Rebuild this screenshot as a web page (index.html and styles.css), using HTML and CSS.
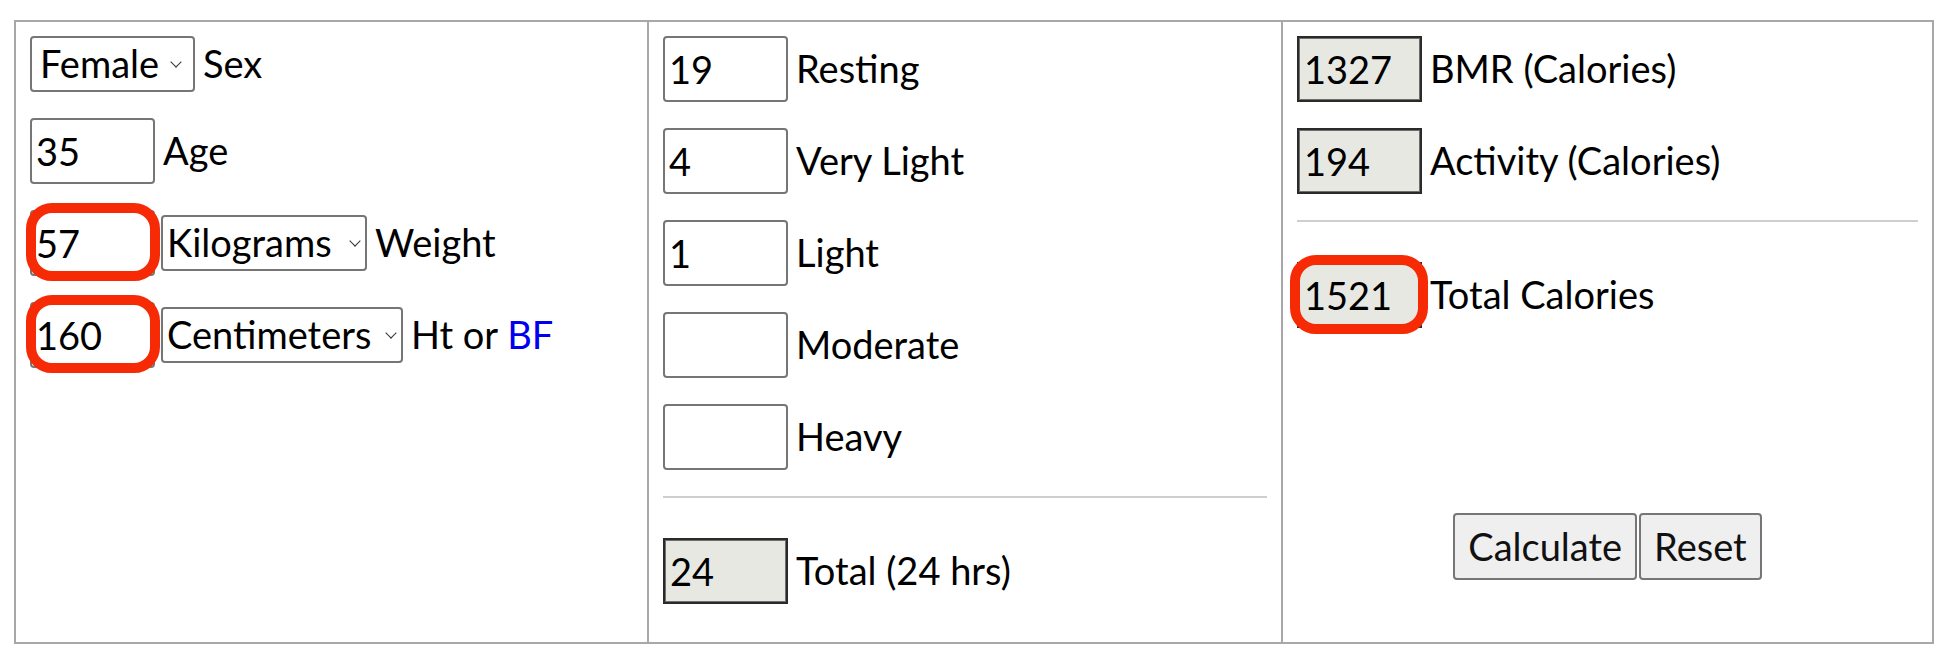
FILE: index.html
```html
<!DOCTYPE html>
<html lang="en">
<head>
<meta charset="utf-8">
<title>Calorie Calculator</title>
<link rel="stylesheet" href="styles.css">
</head>
<body>
<form class="calc">
  <div class="cell">
    <div class="row">
      <span class="select-wrap w-sex"><select><option>Female</option><option>Male</option></select></span>
      <span class="label">Sex</span>
    </div>
    <div class="row">
      <input class="field" type="text" value="35">
      <span class="label">Age</span>
    </div>
    <div class="row">
      <span class="ring"><input class="field" type="text" value="57"></span>
      <span class="select-wrap w-weight tight"><select><option>Kilograms</option><option>Pounds</option></select></span>
      <span class="label">Weight</span>
    </div>
    <div class="row">
      <span class="ring"><input class="field" type="text" value="160"></span>
      <span class="select-wrap w-height tight"><select><option>Centimeters</option><option>Inches</option></select></span>
      <span class="label">Ht or <a class="link" href="#">BF</a></span>
    </div>
  </div>

  <div class="cell">
    <div class="row"><input class="field" type="text" value="19"><span class="label">Resting</span></div>
    <div class="row"><input class="field" type="text" value="4"><span class="label">Very Light</span></div>
    <div class="row"><input class="field" type="text" value="1"><span class="label">Light</span></div>
    <div class="row"><input class="field" type="text" value=""><span class="label">Moderate</span></div>
    <div class="row"><input class="field" type="text" value=""><span class="label">Heavy</span></div>
    <hr class="divider">
    <div class="row last"><input class="field out" type="text" value="24" readonly><span class="label">Total (24 hrs)</span></div>
  </div>

  <div class="cell">
    <div class="row"><input class="field out" type="text" value="1327" readonly><span class="label">BMR (Calories)</span></div>
    <div class="row"><input class="field out" type="text" value="194" readonly><span class="label">Activity (Calories)</span></div>
    <hr class="divider">
    <div class="row last"><span class="ring ring-out"><input class="field out" type="text" value="1521" readonly></span><span class="label">Total Calories</span></div>
    <div class="actions">
      <button class="btn" type="button">Calculate</button><button class="btn" type="reset">Reset</button>
    </div>
  </div>
</form>
</body>
</html>
```

FILE: styles.css
```css
html, body {
  margin: 0;
  background: #fff;
}

body {
  padding: 20px 16px 0 14px;
  font-family: Lato, "Liberation Sans", sans-serif;
  font-size: 38px;
  line-height: 1.2;
  color: #000;
}

.calc {
  display: grid;
  grid-template-columns: 631px 634px 1fr;
  width: 1920px;
  height: 624px;
  box-sizing: border-box;
  border: 2px solid #a8a8a8;
  margin: 0;
}

.cell {
  display: flex;
  flex-direction: column;
  align-items: flex-start;
  padding: 14px;
  min-width: 0;
}

.cell + .cell {
  border-left: 2px solid #a8a8a8;
}

.row {
  display: flex;
  align-items: center;
  gap: 8px;
  margin-bottom: 26px;
}

.row.last {
  margin-bottom: 0;
}

.label {
  white-space: nowrap;
}

.field {
  width: 125px;
  height: 66px;
  box-sizing: border-box;
  margin: 0;
  padding: 0 4px;
  border: 2px solid #767676;
  border-radius: 4px;
  background: #fff;
  font: inherit;
  color: #000;
  outline: none;
}

.field.out {
  background: #e8e8e3;
  border: 2px solid #2a2a2a;
  border-radius: 0;
  box-shadow: inset 0 0 0 1px #6e6e6e;
  padding: 0 5px;
}

.select-wrap {
  position: relative;
  display: inline-flex;
}

.select-wrap.tight {
  margin-left: -2px;
}

.select-wrap select {
  -webkit-appearance: none;
  appearance: none;
  height: 56px;
  box-sizing: border-box;
  margin: 0;
  padding: 0 24px 0 8px;
  border: 2px solid #767676;
  border-radius: 4px;
  background: #fff;
  font: inherit;
  color: #000;
}

.select-wrap.tight select {
  padding: 0 22px 0 4px;
}

.select-wrap::after {
  content: "";
  position: absolute;
  top: 50%;
  right: 8px;
  width: 7px;
  height: 7px;
  border-right: 1.5px solid #333;
  border-bottom: 1.5px solid #333;
  transform: translateY(-75%) rotate(45deg);
  pointer-events: none;
}

.w-sex select { width: 165px; }
.w-sex::after { right: 15px; }
.w-weight select { width: 206px; }
.w-height select { width: 242px; }

.ring {
  position: relative;
  display: inline-flex;
}

.ring::after {
  content: "";
  position: absolute;
  inset: -7px -5px -5px -4px;
  border: 10px solid #f72a06;
  border-radius: 26px;
  pointer-events: none;
}

.ring-out::after {
  inset: -7px -6px -6px -7px;
}

.link {
  color: #0000ee;
  text-decoration: none;
}

.divider {
  align-self: stretch;
  height: 2px;
  border: 0;
  background: #cfcfcf;
  margin: 0 0 40px;
}

.actions {
  align-self: stretch;
  display: flex;
  justify-content: center;
  gap: 2px;
  margin-top: 185px;
}

.btn {
  height: 67px;
  margin: 0;
  padding: 0 13px;
  border: 2px solid #767676;
  border-radius: 4px;
  background: #efefef;
  font: inherit;
  color: #111;
}
```
